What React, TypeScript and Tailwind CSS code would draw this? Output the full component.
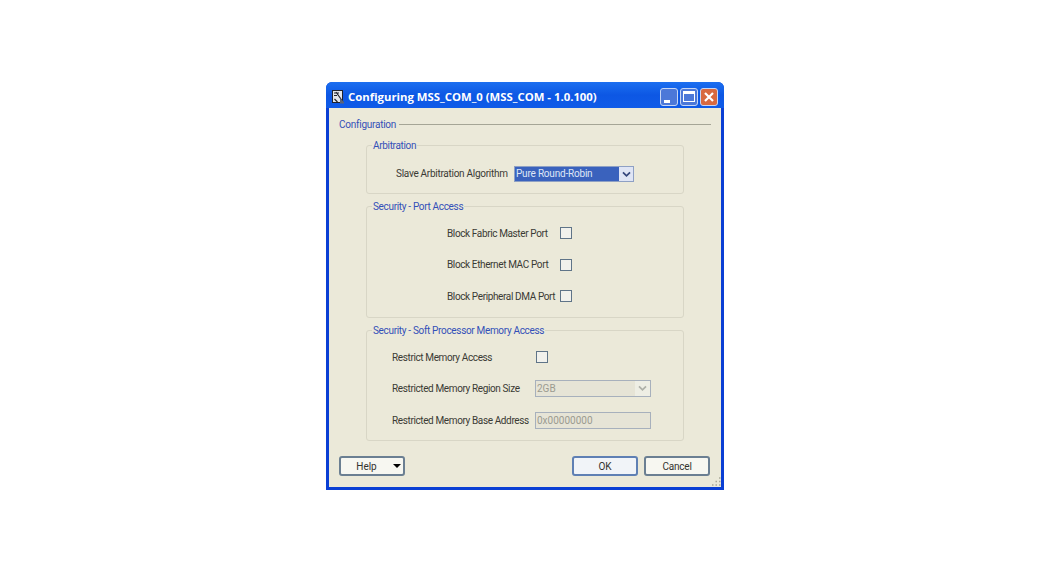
const labelBase = "text-[10px] text-[#3a3a34]";
const labelFont = labelBase + " tracking-[-0.38px]";

function Legend({ children }: { children: string }) {
  return (
    <legend className="ml-[5px] px-px text-[10px] leading-[14px] tracking-[-0.33px] text-[#3350b8]">
      <span className="relative top-px">{children}</span>
    </legend>
  );
}

function Check() {
  return <span className="block h-[12px] w-[12px] border border-[#5f7488] bg-[#f1f1ec]" />;
}

function Chevron({ muted }: { muted?: boolean }) {
  return (
    <svg viewBox="0 0 10 8" className="h-[7px] w-[9px]">
      <path d="M1 1.500 5 5.500 9 1.500" fill="none" stroke={muted ? "#aeb0a8" : "#34467c"} strokeWidth="2" />
    </svg>
  );
}

function TitleIcon() {
  return (
    <svg viewBox="0 0 13 14" className="h-[14px] w-[13px] shrink-0">
      <rect x="0.5" y="0.5" width="10" height="12" fill="#e4e6ea" stroke="#20232c" />
      <path d="M2 3h5M2 5.500h3M4 2 11 12M2.500 9l3 3" stroke="#20232c" strokeWidth="1.200" fill="none" />
      <path d="M8 8l4 4v1.500H8z" fill="#5c6478" />
    </svg>
  );
}

function CaptionButton({ red, children }: { red?: boolean; children: React.ReactNode }) {
  return (
    <span
      className={
        "flex h-[18px] w-[18px] items-center justify-center rounded-[3px] border border-[#c6d6f5] " +
        (red ? "bg-[#d8693f]" : "bg-[#4c78d8]")
      }
    >
      {children}
    </span>
  );
}

function DialogButton({ label, primary }: { label: string; primary?: boolean }) {
  return (
    <button
      className={
        "flex h-[20px] w-[66px] items-center justify-center rounded-[3px] border-2 text-[10px] tracking-[-0.2px] text-[#33332e] " +
        (primary ? "border-[#5f80b4] bg-[#f1f4f8]" : "border-[#6b7f92] bg-[#f7f7f1]")
      }
    >
      {label}
    </button>
  );
}

export default function App() {
  return (
    <div className="h-[569px] w-[1049px] bg-white pl-[326px] pt-[82px] font-['Roboto','Noto_Sans',sans-serif]">
      <div className="flex h-[408px] w-[398px] flex-col rounded-t-[6px] bg-[#0a3fd4]">
        <div className="flex h-[26px] shrink-0 items-center rounded-t-[6px] bg-gradient-to-b from-[#1c6ff0] via-[#0d57e4] to-[#0f5be8] px-[6px] pt-[3px]">
          <TitleIcon />
          <span className="ml-[3px] font-['Open_Sans',sans-serif] text-[11.350px] font-bold text-white">
            Configuring MSS_COM_0 (MSS_COM - 1.0.100)
          </span>
          <div className="ml-auto flex gap-[2px]">
            <CaptionButton>
              <span className="mt-[10px] mr-[5px] h-[3px] w-[6px] bg-white" />
            </CaptionButton>
            <CaptionButton>
              <span className="h-[11px] w-[12px] border border-t-[3px] border-white" />
            </CaptionButton>
            <CaptionButton red>
              <svg viewBox="0 0 12 12" className="h-[12px] w-[12px]">
                <path d="M2 2 10 10M10 2 2 10" stroke="#fff" strokeWidth="2.200" />
              </svg>
            </CaptionButton>
          </div>
        </div>

        <div className="relative mx-[3px] mb-[3px] flex flex-1 flex-col bg-[#ebe9d9] px-[10px]">
          <div className="mt-[9px] flex h-[15px] items-center gap-[3px] text-[10px] tracking-[-0.25px] text-[#3350b8]">
            <span>Configuration</span>
            <span className="h-px flex-1 bg-[#a5a596]" />
          </div>

          <div className="ml-[27px] mt-[6px] flex w-[318px] flex-col">
            <fieldset className="h-[56px] rounded-[3px] border border-[#d8d6c6]">
              <Legend>Arbitration</Legend>
              <div className="mt-[12px] flex h-[20px] items-center pl-[29px]">
                <span className={labelBase + " w-[118px] -translate-y-px whitespace-nowrap tracking-[-0.28px]"}>Slave Arbitration Algorithm</span>
                <div className="flex h-[16px] w-[120px] items-center border border-[#8ea0c4] bg-[#dfe5f5]">
                  <span className="h-full w-[104px] bg-[#3a62bd] pl-px text-[10px] leading-[14px] tracking-[-0.2px] text-[#dfe6f6]">
                    Pure Round-Robin
                  </span>
                  <span className="flex flex-1 justify-center"><Chevron /></span>
                </div>
              </div>
            </fieldset>

            <fieldset className="mt-[5px] h-[119px] rounded-[3px] border border-[#d8d6c6]">
              <Legend>Security - Port Access</Legend>
              <div className="mt-[10px] flex flex-col gap-[11.500px] pl-[80px]">
                {["Block Fabric Master Port", "Block Ethernet MAC Port", "Block Peripheral DMA Port"].map((t) => (
                  <div key={t} className="flex h-[20px] items-center">
                    <span className={labelFont + " w-[113px] whitespace-nowrap"}>{t}</span>
                    <Check />
                  </div>
                ))}
              </div>
            </fieldset>

            <fieldset className="mt-[5px] h-[118px] rounded-[3px] border border-[#d8d6c6]">
              <Legend>Security - Soft Processor Memory Access</Legend>
              <div className="mt-[10px] flex flex-col gap-[11.500px] pl-[25px]">
                <div className="flex h-[20px] items-center">
                  <span className={labelFont + " w-[144px] whitespace-nowrap"}>Restrict Memory Access</span>
                  <Check />
                </div>
                <div className="flex h-[20px] items-center">
                  <span className={labelFont + " w-[143px] whitespace-nowrap"}>Restricted Memory Region Size</span>
                  <div className="flex h-[17px] w-[116px] items-center border border-[#a7b0bc] bg-[#e6e4d6] pl-px text-[10px] text-[#9b9b90]">
                    <span className="flex-1">2GB</span>
                    <span className="flex h-full w-[15px] items-center justify-center bg-[#eeeee4]"><Chevron muted /></span>
                  </div>
                </div>
                <div className="flex h-[20px] items-center">
                  <span className={labelFont + " w-[143px] whitespace-nowrap"}>Restricted Memory Base Address</span>
                  <div className="flex h-[17px] w-[116px] items-center border border-[#a7b0bc] bg-[#e6e4d6] pl-px text-[10px] text-[#9b9b90]">
                    0x00000000
                  </div>
                </div>
              </div>
            </fieldset>
          </div>

          <div className="mt-[15px] mr-px flex items-center">
            <button className="flex h-[20px] w-[66px] items-center rounded-[3px] border-2 border-[#6b7f92] bg-[#f7f7f1] text-[10px] text-[#33332e]">
              <span className="w-[51px] text-center">Help</span>
              <span className="ml-[1px] h-0 w-0 border-x-[4px] border-t-[4px] border-x-transparent border-t-black" />
            </button>
            <div className="ml-auto flex gap-[6px]">
              <DialogButton label="OK" primary />
              <DialogButton label="Cancel" />
            </div>
          </div>

          <svg viewBox="0 0 10 10" className="absolute bottom-0 right-0 h-[10px] w-[10px]">
            <path d="M8 1h1.500M8 4.500h1.500M4.500 4.500H6M8 8h1.500M4.500 8H6M1 8h1.500" stroke="#a9a898" strokeWidth="1.500" />
          </svg>
        </div>
      </div>
    </div>
  );
}
